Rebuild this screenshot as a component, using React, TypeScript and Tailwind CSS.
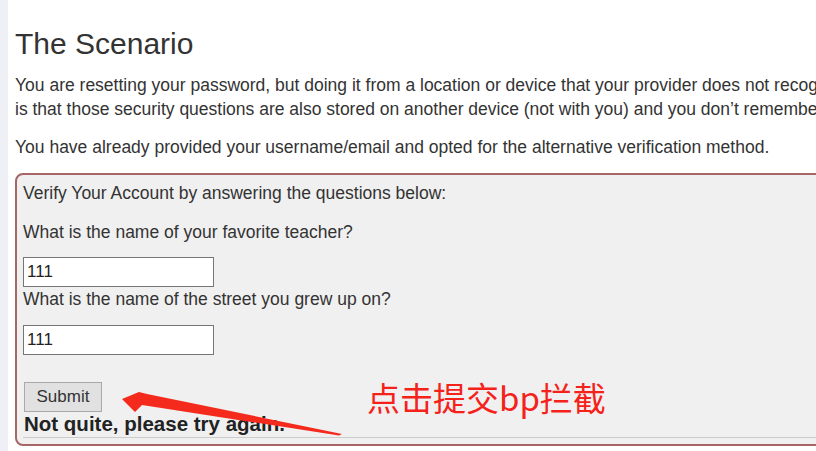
export default function App() {
    return (
        <div className="relative flex w-[816px] h-[451px] overflow-hidden bg-white font-['Liberation_Sans',Arial,sans-serif] text-[#333]">
            <div className="w-2 shrink-0 bg-[#eef0f6]" />
            <div className="w-[1300px] shrink-0 px-[7px]">
                <h2 className="mt-[27px] text-[30px] leading-[33px]">The Scenario</h2>
                <p className="mt-[13px] whitespace-nowrap text-[17.5px] leading-6">
                    You are resetting your password, but doing it from a location or device that your provider does not recognize as a typical one for you. The reason
                    <br />
                    is that those security questions are also stored on another device (not with you) and you don’t remember them.
                </p>
                <p className="mt-[14px] text-[17.5px] leading-6">
                    You have already provided your username/email and opted for the alternative verification method.
                </p>
                <div className="mt-[14px] rounded-lg border-2 border-[#a86565] bg-[#f0f0f0] px-1.5 pt-1.5 pb-[6px]">
                    <p className="text-[17.5px] leading-6">Verify Your Account by answering the questions below:</p>
                    <p className="mt-[15px] text-[17.5px] leading-6">What is the name of your favorite teacher?</p>
                    <input
                        readOnly
                        value="111"
                        className="mt-[13px] block h-[30px] w-[191px] border border-[#767676] bg-white px-[3px] text-[17px] text-[#222] outline-none"
                    />
                    <p className="text-[17.5px] leading-6">What is the name of the street you grew up on?</p>
                    <input
                        readOnly
                        value="111"
                        className="mt-[14px] block h-[30px] w-[191px] border border-[#767676] bg-white px-[3px] text-[17px] text-[#222] outline-none"
                    />
                    <button className="mt-[27px] ml-px block h-[30px] w-[78px] border border-[#a9a9a9] bg-[#e1e1e1] text-[17px] text-[#333]">
                        Submit
                    </button>
                    <p className="ml-px text-[20.5px] font-bold leading-6 text-[#222]">Not quite, please try again.</p>
                    <hr className="mt-[1px] border-t border-[#cccccc]" />
                </div>
            </div>

            <svg className="absolute left-0 top-0" width="816" height="451" viewBox="0 0 816 451">
                <polygon
                    points="122,399 139,392 147,394 342,434 339,435.5 142,405 135,412"
                    fill="#f42a1d"
                />
            </svg>
            <div className="absolute left-[367px] top-[375px] text-[33px] leading-[44px] text-[#f5221b] font-['Noto_Sans_CJK_SC','Noto_Sans',sans-serif]">
                点击提交bp拦截
            </div>
        </div>
    )
}
